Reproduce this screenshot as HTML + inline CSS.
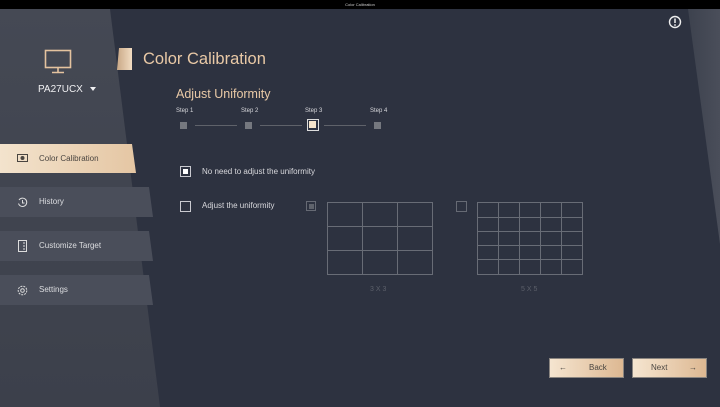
<!DOCTYPE html>
<html><head><meta charset="utf-8"><style>
*{margin:0;padding:0;box-sizing:border-box}
body{width:720px;height:407px;overflow:hidden;background:#2d3240;font-family:"Liberation Sans",sans-serif;position:relative}
.abs{position:absolute}
.top{left:0;top:0;width:720px;height:9px;background:#000;color:#ccc;font-size:4px;text-align:center;line-height:9px}
.side{left:0;top:9px;width:170px;height:398px;background:linear-gradient(180deg,#454954,#3c404b);clip-path:polygon(0 0,110px 0,160px 398px,0 398px)}
.rside{left:680px;top:9px;width:40px;height:260px;background:linear-gradient(90deg,#3a3f4b,#4a4e5a);clip-path:polygon(8px 0,40px 0,40px 235px)}
.item{left:0;width:170px;height:30px;background:#4a4e5a;clip-path:polygon(0 0,149px 0,153px 30px,0 30px);color:#dcdde0;font-size:8px;line-height:30px;padding-left:39px}
.sel{background:linear-gradient(90deg,#f3e3cd,#e1bf99);color:#4a4540;clip-path:polygon(0 0,132px 0,136px 29px,0 29px);height:29px}
.tab{left:117px;top:48px;width:15px;height:22px;background:linear-gradient(90deg,#c9a886,#f1dcc2);clip-path:polygon(2px 0,15px 0,15px 22px,0 22px)}
.t{color:#e9c9a6}
.g{color:#d8d8dc}
.cb{width:11px;height:11px;border:1.5px solid #c9cad0}
.sq{width:7px;height:7px;background:#75787f}
.ln{height:1px;background:#5f626a;top:125px}
.btn{top:358px;width:75px;height:20px;background:linear-gradient(90deg,#f5e5d0,#ddb892);border:1px solid #8a8580;color:#4a4540;font-size:8px;line-height:18px}
</style></head><body>
<div class="abs top">Color Calibration</div>
<div class="abs side"></div>
<div class="abs rside"></div>
<svg class="abs" style="left:44px;top:49px" width="28" height="25" viewBox="0 0 28 25"><rect x="1.5" y="1.5" width="25" height="17" fill="none" stroke="#e4c39f" stroke-width="1.6"/><path d="M14 19v4M8 23.5h12" stroke="#e4c39f" stroke-width="1.6"/></svg>
<div class="abs" style="left:38px;top:84px;color:#f0f0f2;font-size:10px">PA27UCX</div>
<div class="abs" style="left:90px;top:87px;width:0;height:0;border-left:3.5px solid transparent;border-right:3.5px solid transparent;border-top:4px solid #f0f0f2"></div>
<div class="abs item sel" style="top:144px">Color Calibration</div>
<svg class="abs" style="left:17px;top:154px" width="11" height="9"><rect x=".5" y=".5" width="10" height="7" fill="none" stroke="#4a4540"/><circle cx="5.5" cy="4" r="2" fill="#4a4540"/></svg>
<div class="abs item" style="top:187px">History</div>
<svg class="abs" style="left:17px;top:197px" width="11" height="11" viewBox="0 0 11 11"><path d="M2 3A4.2 4.2 0 1 1 1.5 6.5" fill="none" stroke="#ddd" stroke-width="1"/><path d="M5.5 3v3h2" fill="none" stroke="#ddd"/></svg>
<div class="abs item" style="top:231px">Customize Target</div>
<svg class="abs" style="left:18px;top:240px" width="9" height="12"><rect x=".5" y=".5" width="8" height="11" fill="none" stroke="#ddd"/><path d="M5 3h2M5 6h2M5 9h2" stroke="#ddd"/></svg>
<div class="abs item" style="top:275px">Settings</div>
<svg class="abs" style="left:17px;top:285px" width="11" height="11"><circle cx="5.5" cy="5.5" r="4.3" fill="none" stroke="#ddd" stroke-dasharray="2 1"/><circle cx="5.5" cy="5.5" r="1.8" fill="none" stroke="#ddd"/></svg>
<div class="abs tab"></div>
<div class="abs t" style="left:143px;top:50px;font-size:16.5px">Color Calibration</div>
<svg class="abs" style="left:668px;top:15px" width="14" height="14"><circle cx="7" cy="7" r="5.5" fill="none" stroke="#eee" stroke-width="1.4"/><path d="M7 3.5v4.5" stroke="#eee" stroke-width="1.5"/><circle cx="7" cy="10" r=".9" fill="#eee"/></svg>
<div class="abs t" style="left:176px;top:87px;font-size:12.5px">Adjust Uniformity</div>
<div class="abs g" style="left:176px;top:108px;font-size:6px">Step 1</div>
<div class="abs g" style="left:241px;top:108px;font-size:6px">Step 2</div>
<div class="abs g" style="left:305px;top:108px;font-size:6px">Step 3</div>
<div class="abs g" style="left:370px;top:108px;font-size:6px">Step 4</div>
<div class="abs sq" style="left:180px;top:122px"></div>
<div class="abs ln" style="left:195px;width:42px"></div>
<div class="abs sq" style="left:245px;top:122px"></div>
<div class="abs ln" style="left:260px;width:42px"></div>
<div class="abs" style="left:307px;top:119px;width:12px;height:12px;border:1.5px solid #ddd;padding:1px"><div style="width:7px;height:7px;background:#f5e3ca"></div></div>
<div class="abs ln" style="left:324px;width:42px"></div>
<div class="abs sq" style="left:374px;top:122px"></div>
<div class="abs cb" style="left:180px;top:166px;padding:1.5px"><div style="width:5px;height:5px;background:#fff"></div></div>
<div class="abs g" style="left:202px;top:167px;font-size:8px">No need to adjust the uniformity</div>
<div class="abs cb" style="left:180px;top:201px"></div>
<div class="abs g" style="left:202px;top:201px;font-size:8px">Adjust the uniformity</div>
<div class="abs" style="left:306px;top:201px;width:10px;height:10px;border:1px solid #666a74;padding:1.5px"><div style="width:5px;height:5px;background:#5f636c"></div></div>
<svg class="abs" style="left:327px;top:202px" width="107" height="74"><g fill="none" stroke="#686c76" stroke-width="1"><rect x=".5" y=".5" width="105" height="72"/><path d="M35.5 0v73M70.5 0v73M0 24.5h106M0 48.5h106"/></g></svg>
<div class="abs" style="left:370px;top:286px;color:#5c606a;font-size:7px">3 X 3</div>
<div class="abs" style="left:456px;top:201px;width:11px;height:11px;border:1px solid #666a74"></div>
<svg class="abs" style="left:477px;top:202px" width="106" height="74"><g fill="none" stroke="#686c76" stroke-width="1"><rect x=".5" y=".5" width="105" height="72"/><path d="M21.5 0v73M42.5 0v73M63.5 0v73M84.5 0v73M0 15.5h106M0 29.5h106M0 43.5h106M0 57.5h106"/></g></svg>
<div class="abs" style="left:521px;top:286px;color:#5c606a;font-size:7px">5 X 5</div>
<div class="abs btn" style="left:549px"><span style="position:absolute;left:9px">←</span><span style="position:absolute;left:39px">Back</span></div>
<div class="abs btn" style="left:632px"><span style="position:absolute;left:18px">Next</span><span style="position:absolute;left:56px">→</span></div>
</body></html>
